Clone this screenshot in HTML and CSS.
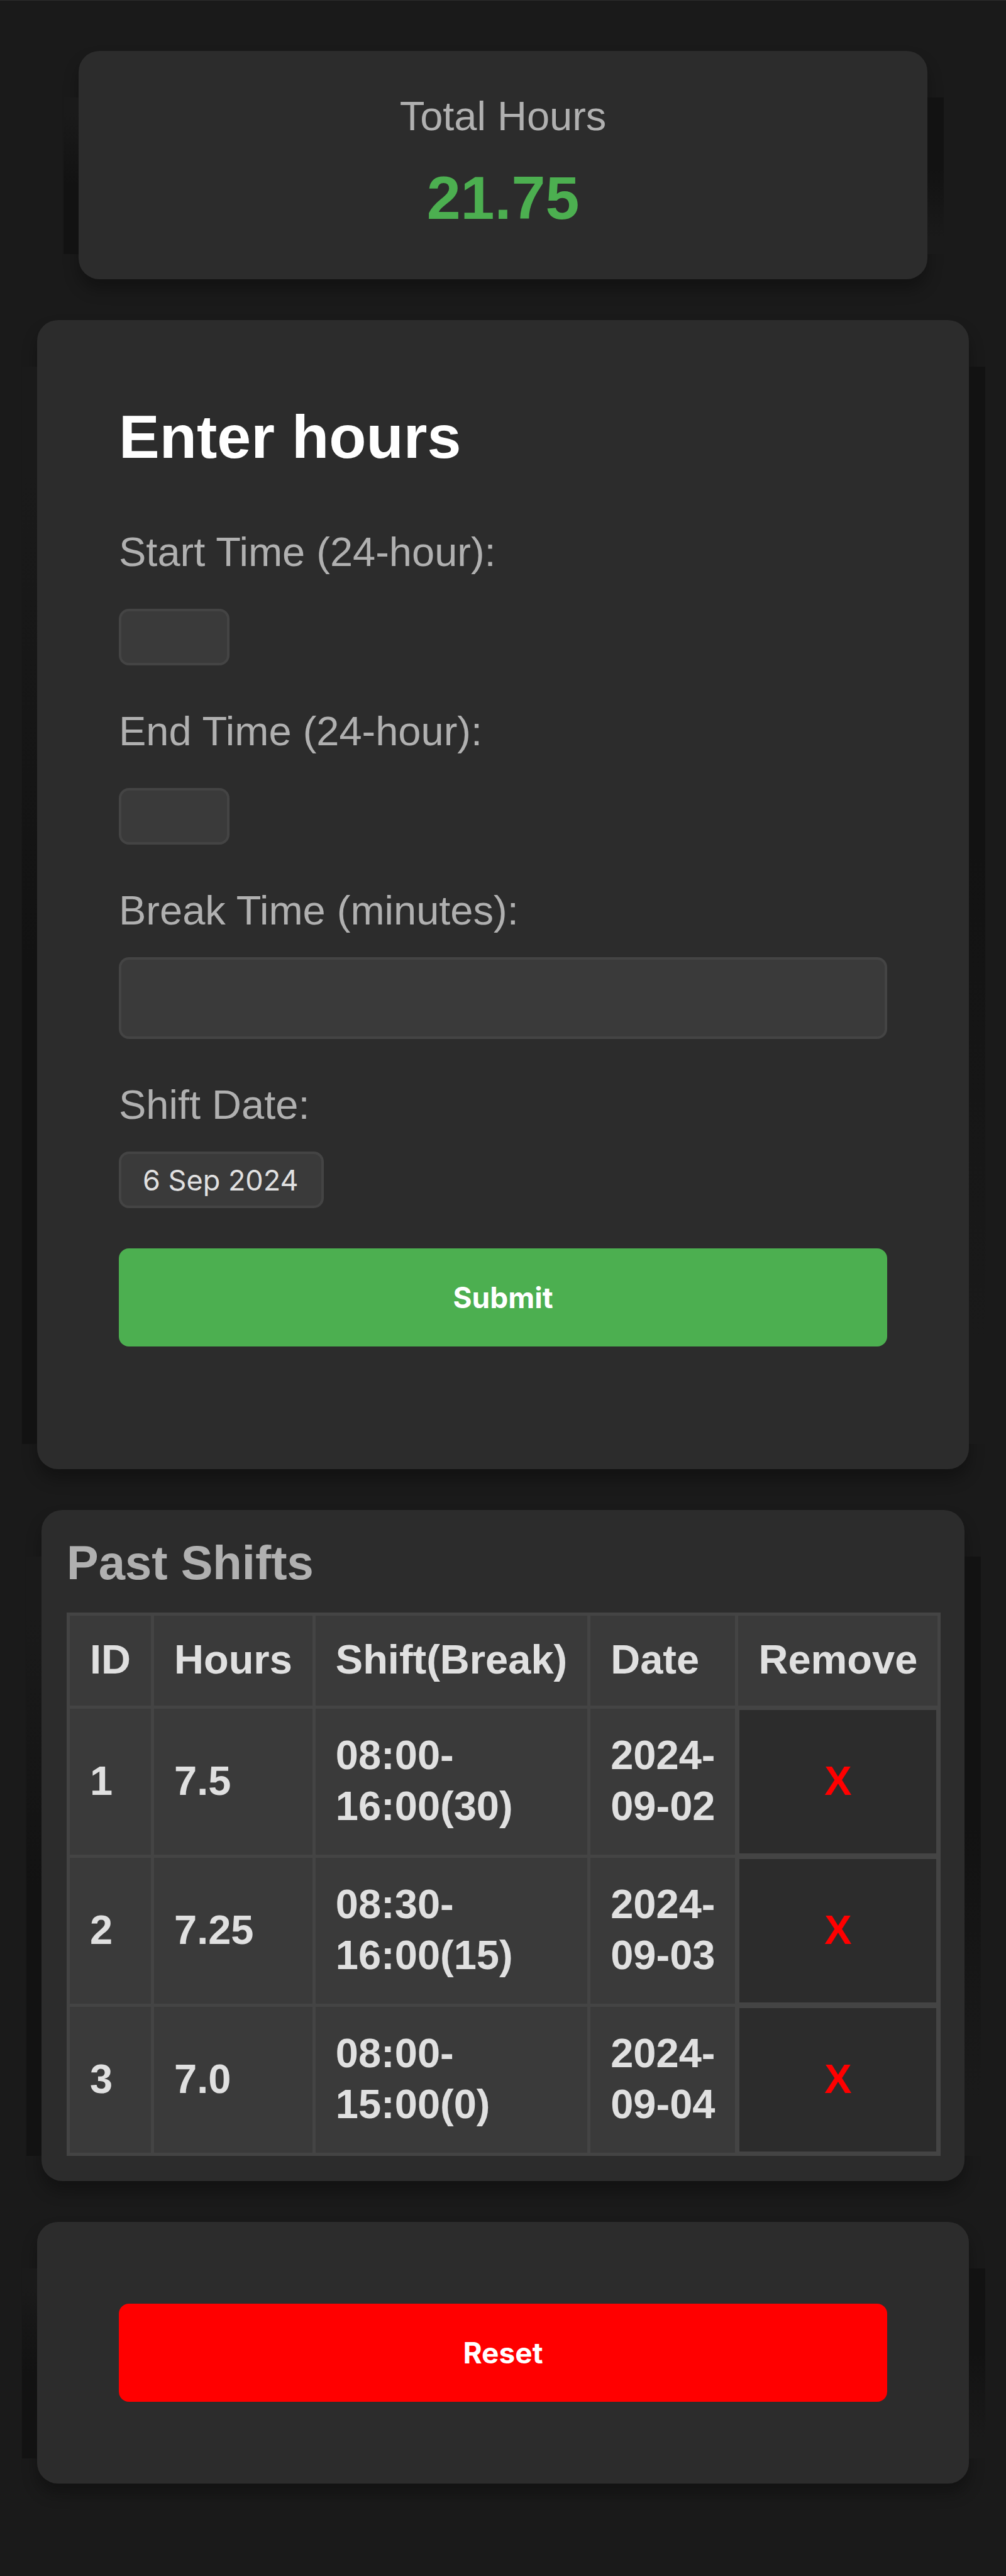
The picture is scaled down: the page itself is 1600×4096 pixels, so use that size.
FILE: index.html
```html
<!DOCTYPE html>
<html lang="en">
<head>
<meta charset="utf-8">
<meta name="viewport" content="width=device-width, initial-scale=1">
<title>Hours</title>
<link rel="stylesheet" href="styles.css">
</head>
<body>
<main class="page">
  <section class="card summary">
    <p class="summary-label">Total Hours</p>
    <p class="summary-value">21.75</p>
  </section>

  <form class="card entry">
    <h1 class="entry-title">Enter hours</h1>
    <label class="label" for="start">Start Time (24-hour):</label>
    <input class="field field-time" id="start" type="text">
    <label class="label" for="end">End Time (24-hour):</label>
    <input class="field field-time" id="end" type="text">
    <label class="label" for="break">Break Time (minutes):</label>
    <input class="field field-wide" id="break" type="text">
    <label class="label" for="date">Shift Date:</label>
    <input class="field field-date" id="date" type="text" value="6 Sep 2024">
    <button class="button button-submit" type="button">Submit</button>
  </form>

  <section class="card history">
    <h2 class="history-title">Past Shifts</h2>
    <table class="shifts">
      <thead>
        <tr><th>ID</th><th>Hours</th><th>Shift(Break)</th><th>Date</th><th>Remove</th></tr>
      </thead>
      <tbody>
        <tr><td>1</td><td>7.5</td><td>08:00-<wbr>16:00(30)</td><td>2024-<wbr>09-02</td><td class="remove-cell"><button class="remove" type="button">X</button></td></tr>
        <tr><td>2</td><td>7.25</td><td>08:30-<wbr>16:00(15)</td><td>2024-<wbr>09-03</td><td class="remove-cell"><button class="remove" type="button">X</button></td></tr>
        <tr><td>3</td><td>7.0</td><td>08:00-<wbr>15:00(0)</td><td>2024-<wbr>09-04</td><td class="remove-cell"><button class="remove" type="button">X</button></td></tr>
      </tbody>
    </table>
  </section>

  <section class="card reset">
    <button class="button button-reset" type="button">Reset</button>
  </section>
</main>
</body>
</html>
```
FILE: styles.css
```css
* {
  box-sizing: border-box;
}

html {
  background: #1a1a1a;
}

body {
  margin: 0;
  border-top: 1px solid #2c2c2c;
  color: #e0e0e0;
  font-family: "Liberation Sans", Arial, sans-serif;
  font-size: 65px;
  line-height: 81px;
}

h1, h2, p {
  margin: 0;
}

.page {
  display: flex;
  flex-direction: column;
  gap: 65px;
  padding: 80px 59px 148px;
}

.card {
  position: relative;
  background: #2c2c2c;
  border-radius: 33px;
  box-shadow: 0 16px 24px rgba(0, 0, 0, 0.3);
}

/* Side shading beside each card */
.card::before,
.card::after {
  content: "";
  position: absolute;
  top: 74px;
  bottom: 40px;
}

.card::before {
  right: 100%;
  width: 24px;
  background: linear-gradient(#1a1a1a 10%, #121212 55%);
}

.card::after {
  left: 100%;
  width: 26px;
  background: linear-gradient(#121212 45%, #1a1a1a 90%);
}

.summary {
  margin: 0 66px;
  padding: 63px 64px 73px;
  text-align: center;
}

.summary-label {
  margin-bottom: 34px;
  color: #b0b0b0;
}

.summary-value {
  color: #4caf50;
  font-size: 97px;
  font-weight: bold;
  line-height: 112px;
}

.entry {
  display: flex;
  flex-direction: column;
  align-items: flex-start;
  padding: 130px 130px 195px;
}

.entry-title {
  margin-bottom: 86px;
  color: #fff;
  font-size: 97px;
  line-height: 112px;
}

.label {
  color: #b0b0b0;
}

.field {
  height: 90px;
  margin: 34px 0 64px;
  padding: 0 34px;
  background: #3a3a3a;
  border: 4px solid #444;
  border-radius: 16px;
  color: #e0e0e0;
  font-family: Inter, sans-serif;
  font-size: 45px;
}

.field-time {
  width: 176px;
  margin-top: 50px;
}

.field-wide {
  width: 100%;
  height: 130px;
}

.field-date {
  width: 326px;
}

.button {
  display: block;
  width: 100%;
  height: 156px;
  padding: 0;
  border: 0;
  border-radius: 16px;
  color: #fff;
  font-family: Inter, sans-serif;
  font-size: 46px;
  font-weight: 700;
}

.button-submit {
  background: #4caf50;
}

.button-reset {
  background: #f00;
}

.history {
  margin: 0 7px;
  padding: 40px;
}

.history-title {
  margin-bottom: 35px;
  color: #b0b0b0;
  font-size: 76px;
  line-height: 88px;
}

.shifts {
  width: 100%;
  border-collapse: collapse;
  font-weight: bold;
  text-align: left;
}

.shifts th,
.shifts td {
  padding: 33px 32px 37px;
  background: #3a3a3a;
  border: 5px solid #444;
}

.shifts th {
  padding: 29px 32px 33px;
}

.shifts .remove-cell {
  background: #2c2c2c;
  box-shadow: inset 0 0 0 2px #444;
  text-align: center;
}

.remove {
  padding: 0;
  background: none;
  border: 0;
  color: #f00;
  font: inherit;
}

.reset {
  padding: 130px;
}
```
